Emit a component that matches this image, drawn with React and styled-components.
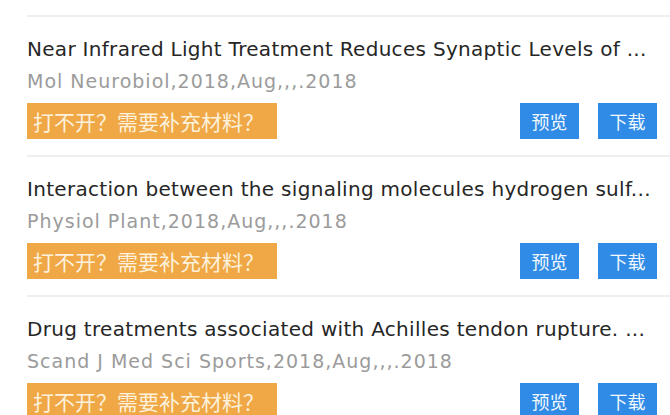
import React from 'react'
import styled, { createGlobalStyle } from 'styled-components'

const GlobalStyle = createGlobalStyle`
  html, body {
    margin: 0;
    padding: 0;
    background: #ffffff;
    overflow: hidden;
  }
  body {
    font-family: 'DejaVu Sans', 'Noto Sans CJK SC', sans-serif;
  }
`

const Page = styled.div`
  width: 670px;
  height: 415px;
  overflow: hidden;
  background: #fff;
`

// list is scrolled: the first card is mostly above the viewport
const List = styled.ul`
  list-style: none;
  margin: -125px 0 0 27px;
  padding: 0;
`

const Item = styled.li`
  border-top: 2px solid #efefef;
  padding: 18px 13px 16px 0;
`

const Title = styled.div`
  font-size: 20px;
  line-height: 28px;
  letter-spacing: 0.3px;
  color: #262626;
  white-space: nowrap;
  overflow: hidden;
  text-overflow: ellipsis;
`

const Source = styled.div`
  margin-top: 5px;
  font-size: 19px;
  line-height: 26px;
  letter-spacing: 1px;
  color: #9b9b9b;
  white-space: nowrap;
`

const Actions = styled.div`
  display: flex;
  align-items: center;
  gap: 19px;
  margin-top: 9px;
`

const Button = styled.button`
  height: 36px;
  border: none;
  border-radius: 0;
  margin: 0;
  padding: 0 ${(p) => (p.$wide ? '6px' : '0')};
  width: ${(p) => (p.$wide ? '250px' : '59px')};
  background: ${(p) => (p.$tone === 'orange' ? '#efa845' : '#2f8be5')};
  color: ${(p) => (p.$tone === 'orange' ? '#fdf1dc' : '#f2f8ff')};
  font-family: 'Noto Sans CJK SC', sans-serif;
  font-size: ${(p) => (p.$wide ? '21px' : '18px')};
  text-align: ${(p) => (p.$wide ? 'left' : 'center')};
  white-space: nowrap;
  cursor: pointer;
`

const Spacer = styled.span`
  flex: 1;
`

const papers = [
  {
    title: 'Photobiomodulation and neuroprotection in experimental models ...',
    source: 'Neurosci Lett,2018,Aug,,,.2018',
  },
  {
    title: 'Near Infrared Light Treatment Reduces Synaptic Levels of ...',
    source: 'Mol Neurobiol,2018,Aug,,,.2018',
  },
  {
    title: 'Interaction between the signaling molecules hydrogen sulf...',
    source: 'Physiol Plant,2018,Aug,,,.2018',
  },
  {
    title: 'Drug treatments associated with Achilles tendon rupture. ...',
    source: 'Scand J Med Sci Sports,2018,Aug,,,.2018',
  },
]

const Paper = ({ title, source }) => (
  <Item>
    <Title>{title}</Title>
    <Source>{source}</Source>
    <Actions>
      <Button $tone="orange" $wide>
        打不开？需要补充材料？
      </Button>
      <Spacer />
      <Button $tone="blue">预览</Button>
      <Button $tone="blue">下载</Button>
    </Actions>
  </Item>
)

const App = () => {
  return (
    <Page>
      <GlobalStyle />
      <List>
        {papers.map((p) => (
          <Paper key={p.source} {...p} />
        ))}
      </List>
    </Page>
  )
}

export default App
